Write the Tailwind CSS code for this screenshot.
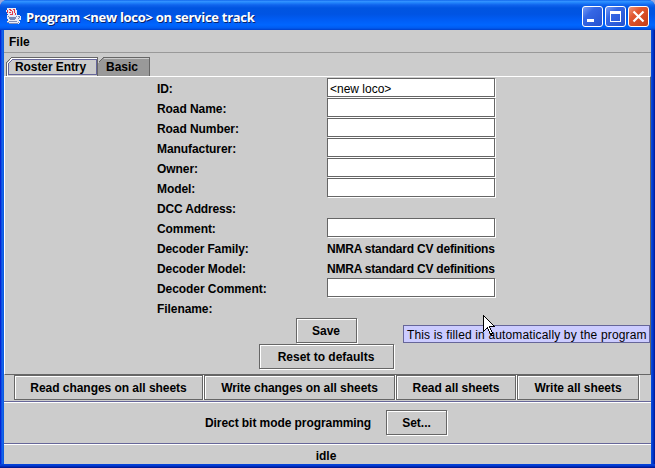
<!DOCTYPE html>
<html lang="en">
<head>
<meta charset="utf-8">
<title>Program &lt;new loco&gt; on service track</title>
<script src="https://cdn.jsdelivr.net/npm/@tailwindcss/browser@4"></script>
</head>
<body class="w-[655px] h-[468px] overflow-hidden bg-[#9aa8dc] text-black text-[12px] leading-[20px] font-['Liberation_Sans',Arial,sans-serif]">
<div class="relative flex flex-col w-[655px] h-[468px] rounded-t-[7px] overflow-hidden bg-[linear-gradient(90deg,#0019cf_0,#0831d9_1px,#166aee_2px,#0855dd_4px,#0855dd_651px,#0441d8_652px,#0029b5_654px,#00138c_655px)] pb-1">
  <header class="flex h-[30px] shrink-0 items-start pl-[6px] pr-[6px] bg-[linear-gradient(180deg,#0058e6_0,#3a93ff_1px,#288eff_2px,#0f63ed_5px,#0055e1_8px,#0054e3_14px,#005df5_20px,#0066ff_25px,#005bf0_28px,#003fc9_30px)]">
    <svg class="mt-[8px] w-4 h-4 shrink-0" viewBox="0 0 16 16" shape-rendering="crispEdges">
      <path d="M1 0h9v2h1v5h3v1h1v4h-2v1h1v2h-1v1H3v-1H1v-2h1v-2H1V7h1V6H1V4H0V2h1z" fill="#e7ebf7"/>
      <path d="M3 1h2v1H3zM7 1h2v1H7zM1 2h1v3H1zM4 2h2v1H4zM8 2h1v3H8zM3 4h2v1H3zM6 3h1v3H6zM4 6h3v1H4zM9 5h1v2H9z" fill="#e23b4b"/>
      <path d="M2 8h1v1h7V8h1v1h-1v2H9v1H4v-1H3V9H2zM12 8h2v2h-1v1h-1v-1h1V9h-1zM3 13h8v1H3zM1 14h2v1h9v-1h1v1h-1v1H3v-1H1z" fill="#7c8ab5"/>
    </svg>
    <h1 class="ml-[4px] mt-[7px] flex-1 whitespace-nowrap font-['Open_Sans',sans-serif] text-[13px] font-bold tracking-[-0.28px] text-white [text-shadow:1px_1px_0_#0a246a]">Program &lt;new loco&gt; on service track</h1>
    <div class="flex gap-[2px] mt-[6px]">
      <svg class="w-[21px] h-[21px]" viewBox="0 0 21 21"><defs><linearGradient id="b" x2="1" y2="1"><stop stop-color="#7b9ff5"/><stop offset=".35" stop-color="#3567e5"/><stop offset="1" stop-color="#2450cf"/></linearGradient><linearGradient id="r" x2="1" y2="1"><stop stop-color="#f09a80"/><stop offset=".35" stop-color="#e2572f"/><stop offset="1" stop-color="#c33b16"/></linearGradient></defs><rect x=".5" y=".5" width="20" height="20" rx="2.5" fill="url(#b)" stroke="#fff"/><path d="M5 13h7v3H5z" fill="#fff"/></svg>
      <svg class="w-[21px] h-[21px]" viewBox="0 0 21 21"><rect x=".5" y=".5" width="20" height="20" rx="2.5" fill="url(#b)" stroke="#fff"/><path d="M5 5h11v11H5zM6 8v7h9V8z" fill="#fff" fill-rule="evenodd"/></svg>
      <svg class="w-[21px] h-[21px]" viewBox="0 0 21 21"><rect x=".5" y=".5" width="20" height="20" rx="2.5" fill="url(#r)" stroke="#fff"/><path d="M5.500 5.500l10 10M15.500 5.500l-10 10" stroke="#fff" stroke-width="2.200"/></svg>
    </div>
  </header>

  <main class="mx-1 flex h-[434px] shrink-0 flex-col bg-[#ccc] font-bold whitespace-nowrap">
    <nav class="h-[23px] shrink-0 border-b border-[#999] pl-[5px] pt-[2px]">File</nav>
    <div class="h-[23px] shrink-0 flex items-end pl-[2px]">
      <svg class="absolute left-[6px] top-[57px] w-[145px] h-[19px]" viewBox="0 0 145 19" shape-rendering="crispEdges">
        <path d="M92 19V6l5-5h46.500v18z" fill="#999"/>
        <path d="M92.500 5.500L97.500 .5H143.500V19" fill="none" stroke="#666"/><path d="M98 1.500H143" stroke="#ccc"/>
        <path d="M.5 19V5.500L5.500 .5H91.500V19" fill="none" stroke="#666"/>
        <path d="M1.500 19V6.500L6 1.500H91" fill="none" stroke="#fff"/>
        <path d="M2.500 17.500V6.500L6.500 2.500H90.500V17.500z" fill="none" stroke="#669"/>
      </svg>
      <div class="relative w-[91px] pl-[9px] h-[19px] tracking-[-0.08px]">Roster Entry</div>
      <div class="relative pl-[9px] h-[19px]">Basic</div>
    </div>
    <section class="h-[299px] shrink-0 border-t border-l border-t-white border-l-white border-r border-r-[#666] border-b border-b-[#666] pt-px">
      <div class="ml-[152px] grid grid-cols-[170px_169px] auto-rows-[20px] leading-[22px] tracking-[-0.07px]">
        <label>ID:</label><div class="h-[19px] w-[168px] border border-[#666] bg-white shadow-[1px_1px_0_#fff] pl-[2px] font-normal leading-[20px] tracking-normal">&lt;new loco&gt;</div>
        <label>Road Name:</label><div class="h-[19px] w-[168px] border border-[#666] bg-white shadow-[1px_1px_0_#fff]"></div>
        <label>Road Number:</label><div class="h-[19px] w-[168px] border border-[#666] bg-white shadow-[1px_1px_0_#fff]"></div>
        <label>Manufacturer:</label><div class="h-[19px] w-[168px] border border-[#666] bg-white shadow-[1px_1px_0_#fff]"></div>
        <label>Owner:</label><div class="h-[19px] w-[168px] border border-[#666] bg-white shadow-[1px_1px_0_#fff]"></div>
        <label>Model:</label><div class="h-[19px] w-[168px] border border-[#666] bg-white shadow-[1px_1px_0_#fff]"></div>
        <label class="tracking-[-0.18px]">DCC Address:</label><div></div>
        <label>Comment:</label><div class="h-[19px] w-[168px] border border-[#666] bg-white shadow-[1px_1px_0_#fff]"></div>
        <label class="tracking-[-0.12px]">Decoder Family:</label><div class="tracking-[-0.21px]">NMRA standard CV definitions</div>
        <label>Decoder Model:</label><div class="tracking-[-0.21px]">NMRA standard CV definitions</div>
        <label>Decoder Comment:</label><div class="h-[19px] w-[168px] border border-[#666] bg-white shadow-[1px_1px_0_#fff]"></div>
        <label>Filename:</label><div></div>
      </div>
      <div class="flex flex-col items-center gap-px pr-[3px] leading-[25px]">
        <button class="h-[25px] w-[61px] border border-[#666] shadow-[1px_1px_0_#fff,inset_1px_1px_0_#fff]">Save</button>
        <button class="h-[25px] w-[135px] border border-[#666] shadow-[1px_1px_0_#fff,inset_1px_1px_0_#fff]">Reset to defaults</button>
      </div>
    </section>
    <div class="flex h-[27px] shrink-0 border-b border-[#669] pl-[10px] gap-px leading-[25px] tracking-[-0.04px]">
      <button class="h-[25px] w-[189px] border border-[#666] shadow-[1px_0_0_#fff,inset_1px_1px_0_#fff]">Read changes on all sheets</button>
      <button class="h-[25px] w-[191px] border border-[#666] shadow-[1px_0_0_#fff,inset_1px_1px_0_#fff]">Write changes on all sheets</button>
      <button class="h-[25px] w-[120px] border border-[#666] shadow-[1px_0_0_#fff,inset_1px_1px_0_#fff]">Read all sheets</button>
      <button class="h-[25px] w-[122px] border border-[#666] shadow-[1px_0_0_#fff,inset_1px_1px_0_#fff]">Write all sheets</button>
    </div>
    <div class="flex h-[42px] shrink-0 items-start pt-[7px] border-t border-t-white border-b border-b-[#669] pl-[201px] leading-[25px]">
      <span class="w-[181px] pt-[1px] tracking-[-0.07px]">Direct bit mode programming</span>
      <button class="h-[25px] w-[61px] border border-[#666] shadow-[1px_1px_0_#fff,inset_1px_1px_0_#fff]">Set...</button>
    </div>
    <footer class="border-t border-white h-[20px] pr-[3px] text-center leading-[22px]">idle</footer>
  </main>
  <div class="-mx-1 h-1 shrink-0 bg-[linear-gradient(180deg,#0441d8_0,#0441d8_1px,#0036cc_2px,#001ea0_3px,#00138c_4px)]"></div>

  <div class="absolute left-[403px] top-[325px] h-[18px] w-[247px] border border-[#669] bg-[#ccf] pl-[3px] leading-[18px] tracking-[0.15px] whitespace-nowrap">This is filled in automatically by the program</div>
  <svg class="absolute left-[483px] top-[315px] w-[12px] h-[21px]" viewBox="0 0 12 21" shape-rendering="crispEdges"><path d="M.5 .5V16.500L4.500 12.500L7.500 19.500L9.500 18.500L6.500 11.500H11.500z" fill="#fff" stroke="#000"/></svg>
</div>
</body>
</html>
